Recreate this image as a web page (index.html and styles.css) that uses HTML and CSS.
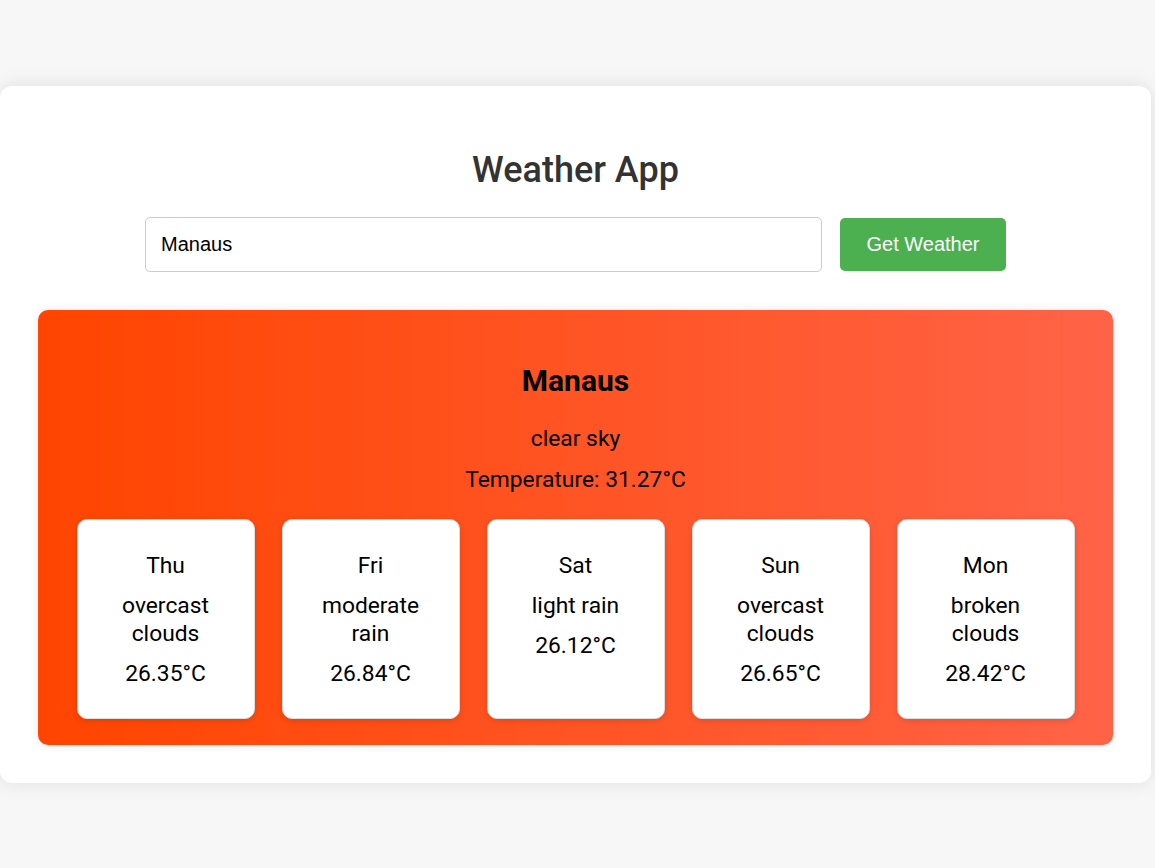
FILE: index.html
```html
<!DOCTYPE html>
<html lang="en">
<head>
<meta charset="utf-8">
<title>Weather App</title>
<link rel="stylesheet" href="styles.css">
</head>
<body>
<div class="container">
  <h1 class="title">Weather App</h1>
  <div class="search">
    <input class="city-input" type="text" value="Manaus">
    <button class="get-btn">Get Weather</button>
  </div>
  <div class="weather-card">
    <h2 class="city">Manaus</h2>
    <p class="desc">clear sky</p>
    <p class="temp">Temperature: 31.27°C</p>
    <div class="forecast">
      <div class="day">
        <p>Thu</p>
        <p>overcast clouds</p>
        <p>26.35°C</p>
      </div>
      <div class="day">
        <p>Fri</p>
        <p>moderate rain</p>
        <p>26.84°C</p>
      </div>
      <div class="day">
        <p>Sat</p>
        <p>light rain</p>
        <p>26.12°C</p>
      </div>
      <div class="day">
        <p>Sun</p>
        <p>overcast clouds</p>
        <p>26.65°C</p>
      </div>
      <div class="day">
        <p>Mon</p>
        <p>broken clouds</p>
        <p>28.42°C</p>
      </div>
    </div>
  </div>
</div>
</body>
</html>
```

FILE: styles.css
```css
* { box-sizing: border-box; }
html, body { margin: 0; padding: 0; }
body {
  background: #f7f7f7;
  font-family: Roboto, "Liberation Sans", Arial, sans-serif;
  min-height: 868px;
  padding-top: 1px;
  display: flex;
  align-items: center;
}
.container {
  width: 1151px;
  background: #fff;
  border-radius: 12px;
  box-shadow: 0 0 20px rgba(0, 0, 0, 0.1);
  padding: 38px;
}
.title {
  margin: 25px 0 26px;
  text-align: center;
  font-size: 36px;
  line-height: 42px;
  font-weight: 500;
  color: #333;
}
.search {
  display: flex;
  justify-content: center;
  align-items: center;
  gap: 18px;
}
.city-input {
  width: 677px;
  height: 55px;
  border: 1px solid #ccc;
  border-radius: 5px;
  padding: 0 15px;
  font-family: "Liberation Sans", Arial, sans-serif;
  font-size: 20px;
  color: #000;
  outline: none;
}
.get-btn {
  width: 166px;
  height: 53px;
  border: none;
  border-radius: 5px;
  background: #4caf50;
  color: #fff;
  font-family: "Liberation Sans", Arial, sans-serif;
  font-size: 20px;
}
.weather-card {
  margin-top: 38px;
  background: linear-gradient(to right, #ff4500, #ff6347);
  border-radius: 10px;
  box-shadow: 0 0 10px rgba(0, 0, 0, 0.1);
  padding: 54px 38px 26px;
  text-align: center;
  color: #000;
}
.city {
  margin: 0 0 28px;
  font-size: 30px;
  line-height: 33px;
  font-weight: 700;
}
.desc, .temp {
  margin: 0;
  font-size: 22.8px;
  line-height: 27px;
}
.desc { margin-bottom: 14px; }
.temp { margin-bottom: 26px; }
.forecast {
  display: flex;
  gap: 27px;
  justify-content: center;
}
.day {
  width: 178px;
  background: #fff;
  border: 1px solid #ddd;
  border-radius: 10px;
  box-shadow: 0 2px 6px rgba(0, 0, 0, 0.12);
  padding: 20px 22px 18px;
}
.day p {
  margin: 12px 0;
  font-size: 22.8px;
  line-height: 28px;
}
```
